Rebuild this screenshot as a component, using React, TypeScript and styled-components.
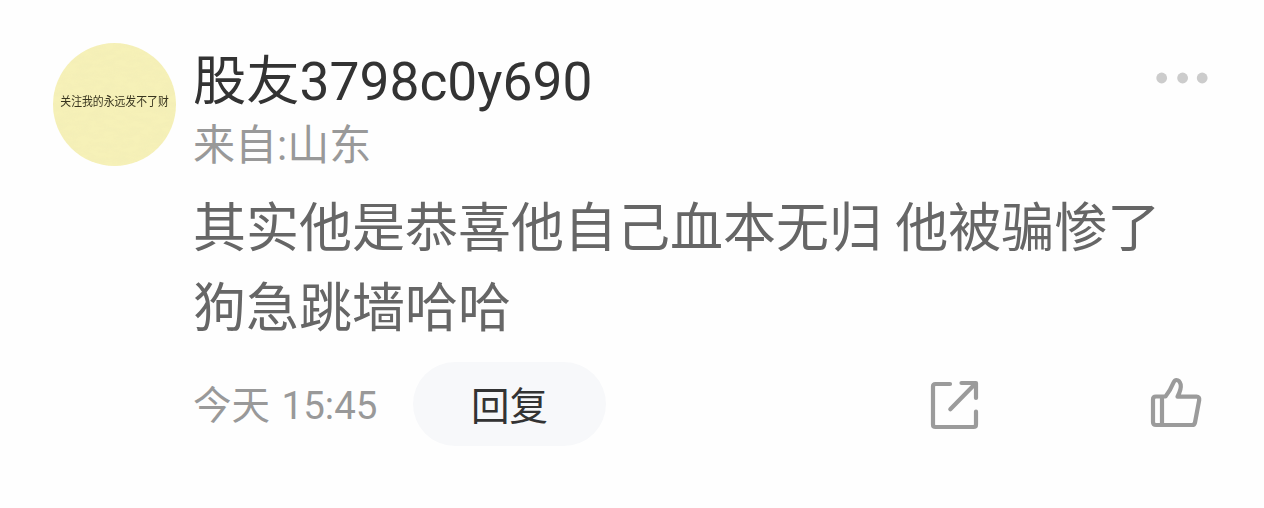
import React from "react";
import styled, { createGlobalStyle } from "styled-components";

const GlobalStyle = createGlobalStyle`
  * { box-sizing: border-box; }
  body {
    margin: 0;
    background: #fefefe;
    font-family: Roboto, "Noto Sans CJK SC", sans-serif;
  }
`;

const Comment = styled.article`
  display: flex;
  gap: 17px;
  width: 1264px;
  height: 508px;
  padding: 43px 49px 0 53px;
  background: #fefefe;
`;

const Avatar = styled.div`
  display: grid;
  flex: none;
  width: 123px;
  height: 123px;
  border-radius: 50%;
  overflow: hidden;
  background: #f6f1b8;
  > * { grid-area: 1 / 1; }
`;

const Motto = styled.span`
  justify-self: center;
  margin-top: 52px;
  height: 16px;
  font-size: 10.85px;
  line-height: 16px;
  white-space: nowrap;
  color: #38351f;
  transform: scaleY(1.12);
`;

const Content = styled.div`
  flex: 1;
  min-width: 0;
`;

const Header = styled.header`
  display: flex;
  justify-content: space-between;
  height: 77px;
`;

const Name = styled.h1`
  margin: 0;
  font-size: 53.3px;
  font-weight: 400;
  line-height: 78px;
  color: #333;
`;

const More = styled.svg`
  width: 54px;
  height: 14px;
  margin: 28px 4px 0 0;
  overflow: visible;
  fill: #ccc;
`;

const Origin = styled.div`
  font-size: 42px;
  line-height: 52px;
  color: #999;
`;

const Message = styled.p`
  margin: 18px 0 0;
  font-size: 53px;
  line-height: 79.5px;
  color: #666;
`;

const Footer = styled.footer`
  display: flex;
  align-items: center;
  height: 84px;
  margin-top: 13px;
`;

const Time = styled.time`
  flex: none;
  width: 220px;
  padding-top: 4px;
  font-size: 38.5px;
  line-height: 56px;
  word-spacing: 2px;
  color: #999;
`;

const Reply = styled.button`
  flex: none;
  width: 193px;
  height: 84px;
  padding: 0 0 2px;
  border: 0;
  border-radius: 42px;
  background: #f7f8fa;
  font: inherit;
  font-size: 38.5px;
  color: #333;
`;

const Actions = styled.div`
  display: flex;
  gap: 140px;
  margin-left: 309px;
  padding-top: 2px;
`;

const ActionIcon = styled.svg`
  flex: none;
  width: 80px;
  height: 80px;
  fill: none;
  stroke: #9b9b9b;
  stroke-width: 4.2;
  stroke-linecap: round;
  stroke-linejoin: round;
`;

export default function App() {
  return (
    <>
      <GlobalStyle />
      <Comment>
        <Avatar>
          <svg width="123" height="123" aria-hidden="true">
            <filter id="paper">
              <feTurbulence type="fractalNoise" baseFrequency="0.08 0.2" numOctaves={3} />
              <feColorMatrix values="0 0 0 0 .8  0 0 0 0 .75  0 0 0 0 .45  .6 0 0 0 -.2" />
            </filter>
            <rect width="123" height="123" filter="url(#paper)" opacity=".4" />
          </svg>
          <Motto>关注我的永远发不了财</Motto>
        </Avatar>
        <Content>
          <Header>
            <Name>股友3798c0y690</Name>
            <More viewBox="0 0 54 14">
              <circle cx="4.7" cy="7" r="5.4" />
              <circle cx="25.6" cy="7" r="5.4" />
              <circle cx="45.2" cy="7" r="5.4" />
            </More>
          </Header>
          <Origin>来自:山东</Origin>
          <Message>
            其实他是恭喜他自己血本无归 他被骗惨了
            <br />
            狗急跳墙哈哈
          </Message>
          <Footer>
            <Time>今天 15:45</Time>
            <Reply>回复</Reply>
            <Actions>
              <ActionIcon viewBox="0 0 80 80">
                <path d="M35 19H20.5Q18 19 18 21.5V59.5Q18 62 20.5 62H58.5Q61 62 61 59.5V46.5" />
                <path d="M46.5 18H61V33M60 19L35.3 44.3" />
              </ActionIcon>
              <ActionIcon viewBox="0 0 80 80">
                <path d="M27 31.5H21Q18 31.5 18 34.5V57Q18 60 21 60H57Q59.5 60 60 57.5L64.2 35Q64.7 31.7 61.5 31.7H42.5Q46.5 24 45.7 19.5Q44.5 15 41.5 15Q39.5 15 38.3 18Q35 26 30.5 31.5H27V60" />
              </ActionIcon>
            </Actions>
          </Footer>
        </Content>
      </Comment>
    </>
  );
}
